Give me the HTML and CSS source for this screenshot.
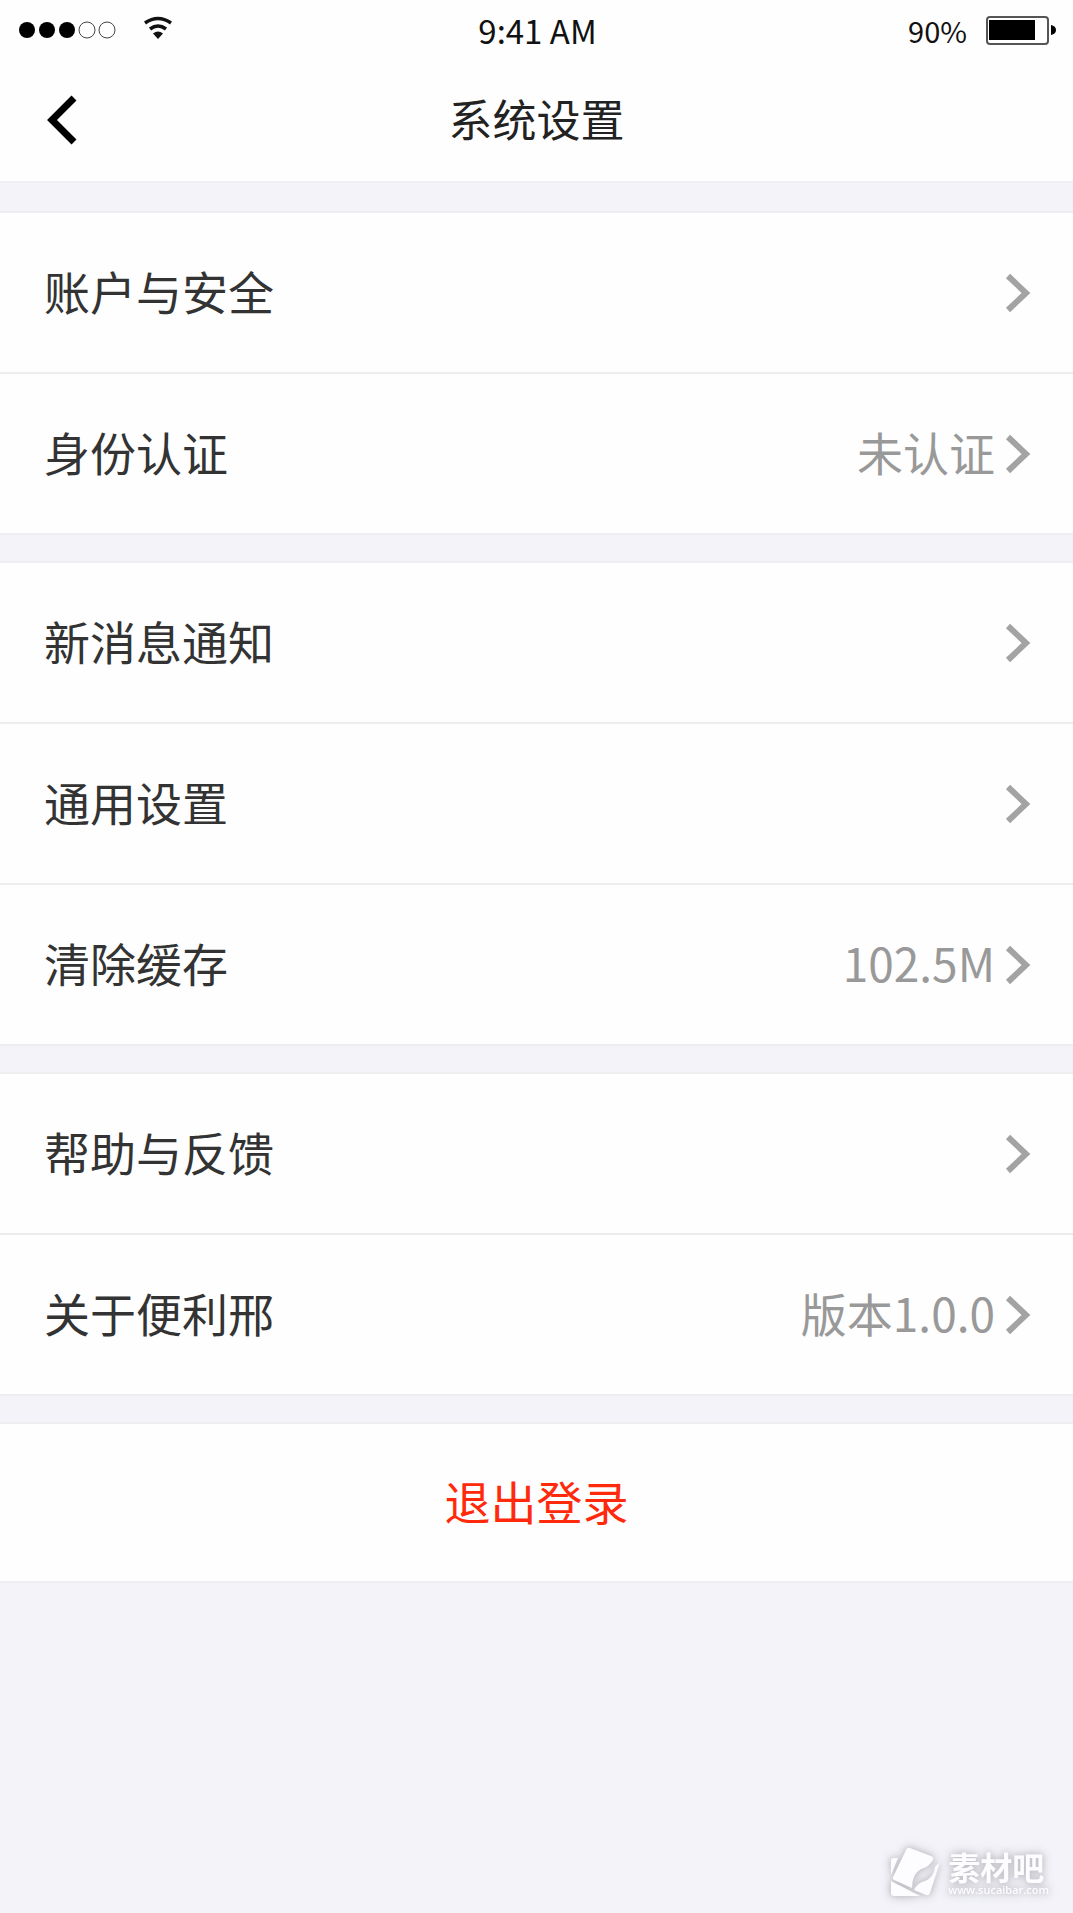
FILE: index.html
```html
<!DOCTYPE html>
<html lang="zh-CN">
<head>
<meta charset="utf-8">
<meta name="viewport" content="width=device-width, initial-scale=1">
<title>系统设置</title>
<link rel="stylesheet" href="styles.css">
</head>
<body>
<svg class="sprite" aria-hidden="true">
  <symbol id="chevron" viewBox="0 0 26 40"><path d="M3 3 L21 20 L3 37" fill="none" stroke="currentColor" stroke-width="6"/></symbol>
</svg>
<div class="page">
  <header class="header">
    <div class="status">
      <div class="status-left">
        <svg class="signal" viewBox="0 0 100 20" aria-hidden="true">
          <circle cx="9" cy="10" r="8"/><circle cx="29" cy="10" r="8"/><circle cx="49" cy="10" r="8"/>
          <circle class="empty" cx="69" cy="10" r="8"/><circle class="empty" cx="89" cy="10" r="8"/>
        </svg>
        <svg class="wifi" viewBox="0 0 30 24" aria-hidden="true">
          <path d="M2 7 Q15 -2 28 7" stroke-width="3.500"/>
          <path d="M7 13 Q15 7 23 13" stroke-width="3.500"/>
          <path class="solid" d="M10 17.500 Q15 13.500 20 17.500 L15 23 Z"/>
        </svg>
      </div>
      <time class="clock">9:41 AM</time>
      <div class="status-right">
        <span class="percent">90%</span>
        <svg class="battery" viewBox="0 0 72 30" aria-hidden="true">
          <rect x="2" y="2" width="61" height="27" rx="3" fill="#fff" stroke="#555" stroke-width="2"/>
          <rect x="4" y="5" width="46" height="20"/>
          <path d="M66 10 Q71 11 71 15 Q71 19 66 20 Z"/>
        </svg>
      </div>
    </div>
    <nav class="nav">
      <button class="back" type="button" aria-label="返回">
        <svg viewBox="0 0 32 52" aria-hidden="true"><path d="M28 3 L6 25 L28 47" fill="none" stroke="#000" stroke-width="7"/></svg>
      </button>
      <h1 class="title">系统设置</h1>
    </nav>
  </header>

  <main class="groups">
    <ul class="group">
      <li><a class="row" href="#account"><span class="label">账户与安全</span><svg class="chevron" aria-hidden="true"><use href="#chevron"/></svg></a></li>
      <li><a class="row" href="#identity"><span class="label">身份认证</span><span class="value">未认证</span><svg class="chevron" aria-hidden="true"><use href="#chevron"/></svg></a></li>
    </ul>
    <ul class="group">
      <li><a class="row" href="#notice"><span class="label">新消息通知</span><svg class="chevron" aria-hidden="true"><use href="#chevron"/></svg></a></li>
      <li><a class="row" href="#general"><span class="label">通用设置</span><svg class="chevron" aria-hidden="true"><use href="#chevron"/></svg></a></li>
      <li><a class="row" href="#cache"><span class="label">清除缓存</span><span class="value">102.5M</span><svg class="chevron" aria-hidden="true"><use href="#chevron"/></svg></a></li>
    </ul>
    <ul class="group">
      <li><a class="row" href="#help"><span class="label">帮助与反馈</span><svg class="chevron" aria-hidden="true"><use href="#chevron"/></svg></a></li>
      <li><a class="row" href="#about"><span class="label">关于便利邢</span><span class="value">版本1.0.0</span><svg class="chevron" aria-hidden="true"><use href="#chevron"/></svg></a></li>
    </ul>
    <button class="logout" type="button">退出登录</button>
  </main>

  <footer class="footer">
    <svg class="mark" viewBox="0 0 52 52" aria-hidden="true">
      <path d="M1 14 Q1 11 4 11 L8 11 L1 28 Z"/>
      <path d="M1 34 L30 49 L4 49 Q1 49 1 46 Z"/>
      <path d="M16 3 Q17 0 20 1 L41 9 Q44 10 43 13 Q39 20 31 22 Q22 27 22 41 L4 33 Q2 32 3 30 Z"/>
      <path d="M50 15 L40 46 Q39 49 36 48 L24 43 Q27 36 35 34 Q44 30 45 20 Z"/>
    </svg>
    <div class="brand">
      <span class="brand-name">素材吧</span>
      <span class="brand-url">www.sucaibar.com</span>
    </div>
  </footer>
</div>
</body>
</html>
```
FILE: styles.css
```css
* { box-sizing: border-box; }

body {
  margin: 0;
  background: #f3f3f9;
  color: #333;
  font-family: "Noto Sans CJK SC", sans-serif;
}

button {
  border: 0;
  padding: 0;
  background: none;
  font: inherit;
  cursor: pointer;
}

.sprite {
  position: absolute;
  width: 0;
  height: 0;
}

.page {
  display: flex;
  flex-direction: column;
  min-height: 100vh;
}

.header {
  background: #fefefe;
  border-bottom: 2px solid #f0f0f3;
}

.status,
.nav {
  display: grid;
  grid-template-columns: 1fr auto 1fr;
  align-items: center;
}

.status {
  height: 60px;
  padding: 0 16px 0 18px;
  color: #111;
}

.status-left,
.status-right {
  display: flex;
  align-items: center;
}

.status-left { gap: 25px; }

.status-right {
  justify-content: flex-end;
  gap: 18px;
}

.signal {
  width: 100px;
  height: 20px;
}

.signal .empty {
  fill: #fff;
  stroke: #444;
  stroke-width: 1;
}

.wifi {
  width: 30px;
  height: 24px;
  margin-bottom: 4px;
  fill: none;
  stroke: #111;
}

.wifi .solid {
  fill: #111;
  stroke: none;
}

.clock {
  font-size: 33px;
  line-height: 40px;
}

.percent {
  font-size: 29px;
  line-height: 40px;
}

.battery {
  width: 72px;
  height: 30px;
}

.nav {
  height: 121px;
  padding: 0 46px;
}

.back {
  width: 32px;
  height: 52px;
}

.back svg {
  display: block;
  width: 32px;
  height: 52px;
}

.title {
  margin: 0;
  padding-bottom: 6px;
  color: #222;
  font-size: 44px;
  font-weight: 400;
  line-height: 60px;
}

.groups {
  display: flex;
  flex-direction: column;
  gap: 26px;
  padding-top: 28px;
}

.group {
  margin: 0;
  padding: 0;
  list-style: none;
  background: #fefefe;
  border-top: 2px solid #eeeef1;
  border-bottom: 2px solid #eeeef1;
}

.group li + li { border-top: 2px solid #ededed; }

.row {
  display: flex;
  align-items: center;
  gap: 10px;
  min-height: 159px;
  padding: 0 42px 0 44px;
  color: inherit;
  font-size: 46px;
  line-height: 60px;
  text-decoration: none;
}

.label,
.value { padding-bottom: 6px; }

.label { flex: 1; }

.value { color: #999; }

.chevron {
  width: 26px;
  height: 40px;
  color: #a3a3a3;
}

.logout {
  min-height: 161px;
  padding-bottom: 6px;
  background: #fefefe;
  border-top: 2px solid #eeeef1;
  border-bottom: 2px solid #eeeef1;
  color: #ff2a0c;
  font-size: 46px;
  line-height: 60px;
}

.footer {
  display: flex;
  justify-content: flex-end;
  align-items: center;
  gap: 6px;
  margin-top: auto;
  padding: 0 24px 14px;
  color: #fdfdff;
  filter: drop-shadow(0 0 3px #bcbcc2) drop-shadow(0 0 5px #d0d0d6);
}

.mark {
  width: 52px;
  height: 52px;
  fill: currentColor;
}

.brand {
  display: flex;
  flex-direction: column;
}

.brand-name {
  font-size: 32px;
  font-weight: 700;
  line-height: 34px;
}

.brand-url {
  font-family: "Open Sans", sans-serif;
  font-size: 11px;
  font-weight: 600;
  line-height: 14px;
}
```
